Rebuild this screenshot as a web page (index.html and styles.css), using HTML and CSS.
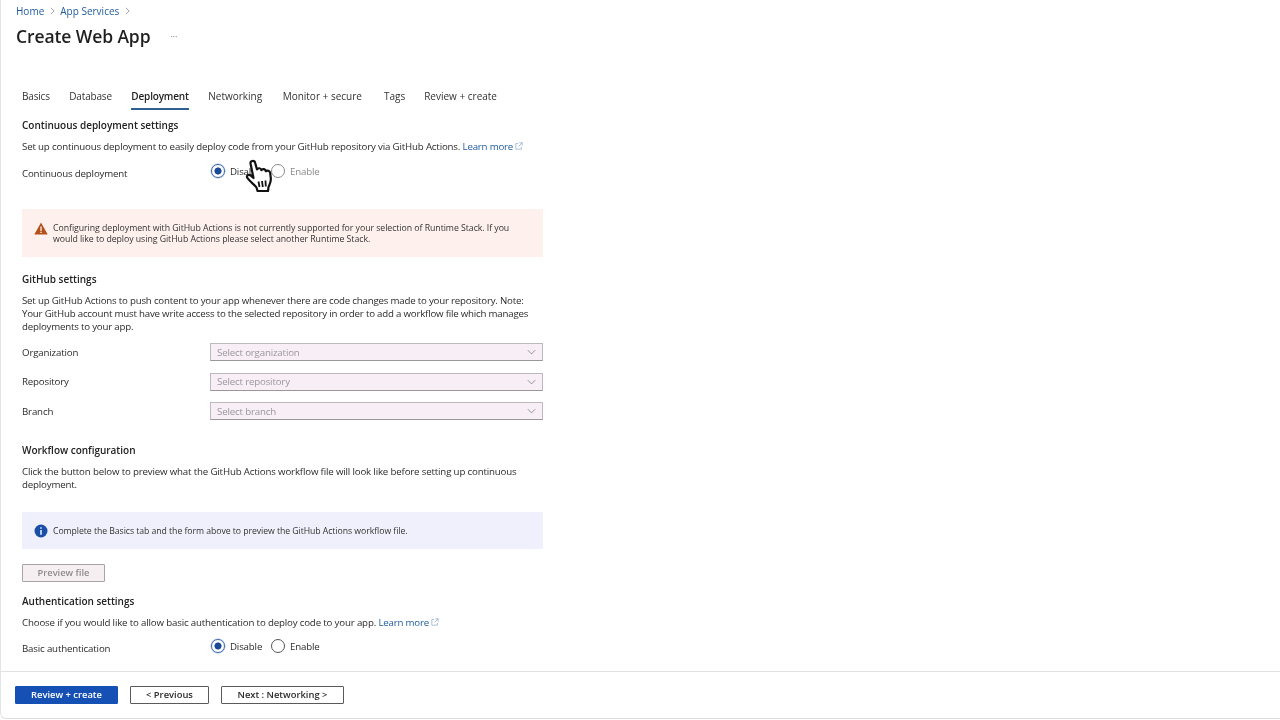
FILE: index.html
```html
<!DOCTYPE html>
<html lang="en">
<head>
<meta charset="utf-8">
<title>Create Web App</title>
<link rel="stylesheet" href="styles.css">
</head>
<body>
<div class="page">
  <main class="main">
    <nav class="crumbs">
      <a>Home</a><svg class="crumb-sep" viewBox="0 0 6 10"><path d="M1 1l4 4-4 4"/></svg>
      <a>App Services</a><svg class="crumb-sep" viewBox="0 0 6 10"><path d="M1 1l4 4-4 4"/></svg>
    </nav>
    <div class="title-row">
      <h1>Create Web App</h1>
      <span class="more">···</span>
    </div>
    <div class="tabs">
      <span class="tab">Basics</span>
      <span class="tab">Database</span>
      <span class="tab active">Deployment</span>
      <span class="tab wide">Networking</span>
      <span class="tab wide monitor">Monitor + secure</span>
      <span class="tab wide tags">Tags</span>
      <span class="tab wide">Review + create</span>
    </div>
    <div class="content">
      <h2 class="h-first">Continuous deployment settings</h2>
      <p class="line">Set up continuous deployment to easily deploy code from your GitHub repository via GitHub Actions. <a class="link">Learn more <svg class="ext" viewBox="0 0 10 10"><path d="M4 2H1v7h7V6M5.500 1H9v3.500M9 1L4.500 5.500"/></svg></a></p>
      <div class="radio-row cd-row">
        <span class="label">Continuous deployment</span>
        <span class="radio on"></span><span class="r-text r-d">Disable</span>
        <span class="radio dim"></span><span class="r-text dimmed">Enable</span>
      </div>
      <div class="banner warn">
        <svg class="b-icon" viewBox="0 0 14 13"><path fill="#b4501c" d="M7 .5L13.700 12.500H.3z"/><path fill="#fff" d="M6.400 4.500h1.200v4.500H6.400zM6.400 9.800h1.200v1.200H6.400z"/></svg>
        <span>Configuring deployment with GitHub Actions is not currently supported for your selection of Runtime Stack. If you would like to deploy using GitHub Actions please select another Runtime Stack.</span>
      </div>
      <h2 class="h-gh">GitHub settings</h2>
      <p class="para p-gh">Set up GitHub Actions to push content to your app whenever there are code changes made to your repository. Note: Your GitHub account must have write access to the selected repository in order to add a workflow file which manages deployments to your app.</p>
      <div class="fields">
        <div class="field"><span class="label">Organization</span><div class="select"><span>Select organization</span><svg class="chev" viewBox="0 0 12 7"><path d="M1 1l5 5 5-5"/></svg></div></div>
        <div class="field"><span class="label">Repository</span><div class="select"><span>Select repository</span><svg class="chev" viewBox="0 0 12 7"><path d="M1 1l5 5 5-5"/></svg></div></div>
        <div class="field"><span class="label">Branch</span><div class="select"><span>Select branch</span><svg class="chev" viewBox="0 0 12 7"><path d="M1 1l5 5 5-5"/></svg></div></div>
      </div>
      <h2 class="h-wf">Workflow configuration</h2>
      <p class="para p-wf">Click the button below to preview what the GitHub Actions workflow file will look like before setting up continuous deployment.</p>
      <div class="banner info">
        <svg class="b-icon" viewBox="0 0 14 14"><circle cx="7" cy="7" r="6.500" fill="#1a4fa8"/><path fill="#fff" d="M6.300 6h1.400v4.800H6.300zM6.300 3.300h1.400v1.500H6.300z"/></svg>
        <span class="info-text">Complete the Basics tab and the form above to preview the GitHub Actions workflow file.</span>
      </div>
      <button class="preview">Preview file</button>
      <h2 class="h-auth">Authentication settings</h2>
      <p class="line">Choose if you would like to allow basic authentication to deploy code to your app. <a class="link">Learn more <svg class="ext" viewBox="0 0 10 10"><path d="M4 2H1v7h7V6M5.500 1H9v3.500M9 1L4.500 5.500"/></svg></a></p>
      <div class="radio-row auth-row">
        <span class="label">Basic authentication</span>
        <span class="radio on"></span><span class="r-text r-d2">Disable</span>
        <span class="radio"></span><span class="r-text">Enable</span>
      </div>
    </div>
  </main>
  <footer class="footer">
    <button class="btn primary">Review + create</button>
    <button class="btn prev">&lt; Previous</button>
    <button class="btn next">Next : Networking &gt;</button>
  </footer>
  <svg class="cursor" viewBox="0 0 30 36">
    <path fill="#fff" stroke="#111" stroke-width="2.200" stroke-linejoin="round" d="M6.500 4.500c-.3-3 4-3.500 4.700-.5l1.800 6.500c1-2 4-1.500 4.500.7 1-1.800 4-1.200 4.400 1 1.200-1.300 4-.4 4.300 2l.6 5c.4 4-1.300 6.200-2.300 9l-.5 3.800H13.500l-1-3.500c-2-3-6-5.300-9-9.300-1.500-2 .5-4.200 2.700-3l3.300 2.800z"/>
    <path fill="none" stroke="#111" stroke-width="1.800" d="M14.500 22.500l1 5.500M18 22l.8 6M21.500 21.500l.3 6"/>
  </svg>
</div>
</body>
</html>
```

FILE: styles.css
```css
* { box-sizing: border-box; }
html, body { margin: 0; padding: 0; }
body {
  width: 1280px;
  height: 720px;
  overflow: hidden;
  background: #fff;
  color: #2b2b2b;
  font-family: "Open Sans", "Noto Sans", "Liberation Sans", sans-serif;
  font-size: 9.700px;
  letter-spacing: -0.160px;
}
.page {
  position: relative;
  height: 719px;
  display: flex;
  flex-direction: column;
  border-left: 1px solid #e4e4e6;
  border-bottom: 1px solid #dcdcde;
  border-bottom-left-radius: 6px;
  filter: blur(0.35px);
}
.main { flex: 1; padding-left: 15px; min-height: 0; }
a { color: #1f5a9e; }
.crumbs { height: 22px; display: flex; align-items: center; font-size: 10px; letter-spacing: 0; }
.crumb-sep { width: 5px; height: 8px; margin: 0 5.500px; fill: none; stroke: #8a8a8a; stroke-width: 1; }
.title-row { height: 28px; display: flex; align-items: center; }
h1 { margin: 0; font-size: 17.500px; font-weight: 600; color: #1f1f1f; letter-spacing: -0.100px; }
.more { margin-left: 20px; font-size: 9px; color: #777; }
.tabs { display: flex; margin: 37px 0 0 6px; height: 23px; }
.tab { margin-right: 19.500px; line-height: 19px; height: 23px; font-size: 10px; letter-spacing: -0.180px; color: #333; white-space: nowrap; }
.tab.wide { margin-right: 20.500px; letter-spacing: 0; }
.tab.monitor { margin-right: 22px; }
.tab.tags { margin-right: 19px; }
.tab.active { font-weight: 600; color: #222; border-bottom: 2px solid #2f5f8f; }
.content { padding-left: 6px; width: 535px; }
h2 { margin: 0; font-size: 10px; font-weight: 600; line-height: 14px; color: #222; letter-spacing: -0.020px; }
.h-first { margin-top: 8px; }
.line { margin: 8px 0 0; line-height: 14px; white-space: nowrap; }
.para { margin: 0; line-height: 13px; width: 521px; }
.link { color: #1f5a9e; letter-spacing: -0.200px; }
.ext { width: 8px; height: 8px; fill: none; stroke: #8fa9c8; stroke-width: .9; vertical-align: 0; }
.label { width: 188px; flex: none; }
.radio-row { display: flex; align-items: center; height: 16px; }
.radio-row .label { position: relative; top: 2px; }
.cd-row { margin-top: 9px; }
.auth-row { margin-top: 8px; }
.radio { width: 14px; height: 14px; flex: none; border: 1px solid #555; border-radius: 50%; background: #fff; margin-left: 1px; }
.radio.on { border: 1px solid #3a66a8; box-shadow: 0 0 0 0.500px #9db4d6; background: radial-gradient(circle, #1a4a96 0 3.200px, #fff 3.900px); }
.radio.dim { border-color: #8a8a8a; }
.r-text { margin-left: 5px; }
.r-d, .r-d2 { width: 40px; }
.dimmed { color: #8a8a8a; }
.banner { width: 521px; display: flex; font-size: 8.750px; line-height: 11.200px; color: #333; padding-left: 12px; letter-spacing: -0.050px; }
.b-icon { width: 14px; flex: none; margin-right: 5px; }
.warn { margin-top: 30px; height: 48px; background: #fef1ed; padding-top: 13px; padding-right: 30px; }
.warn span { padding-top: 1px; }
.warn .b-icon { height: 13px; }
.info { margin-top: 21px; height: 37px; background: #f0f0fc; align-items: center; font-size: 8.700px; }
.info-text { margin-top: 2px; }
.info .b-icon { height: 14px; }
.h-gh { margin-top: 15px; }
.p-gh { margin-top: 8px; letter-spacing: -0.200px; }
.fields { margin-top: 10px; display: flex; flex-direction: column; gap: 11.500px; }
.field { display: flex; align-items: center; height: 18px; }
.select {
  width: 333px;
  height: 18px;
  display: flex;
  align-items: center;
  justify-content: space-between;
  padding: 0 6px;
  background: #f7eff5;
  border: 1px solid #bdb9bd;
  border-bottom-color: #9a969a;
  color: #9a96a0;
}
.chev { width: 9px; height: 6px; fill: none; stroke: #77757a; stroke-width: 1; }
.h-wf { margin-top: 23px; }
.p-wf { margin-top: 8px; }
.preview {
  display: block;
  margin: 15px 0 0;
  width: 83px;
  height: 18px;
  padding: 0 0 1px;
  font: 600 9.300px "Open Sans", "Noto Sans", sans-serif;
  color: #8f8a8e;
  background: #f6eff1;
  border: 1px solid #a8a4a6;
  border-radius: 1px;
}
.h-auth { margin-top: 12px; }
.footer { height: 47px; flex: none; border-top: 1px solid #e2e2e4; display: flex; align-items: flex-start; padding: 14px 0 0 14px; }
.btn {
  height: 18px;
  padding: 0 0 1px;
  font: 600 9.400px "Open Sans", "Noto Sans", sans-serif;
  background: #fff;
  color: #2b2b2b;
  border: 1px solid #5a5a5a;
  border-radius: 1px;
}
.primary { width: 103px; background: #1550b4; border-color: #1550b4; color: #fff; }
.prev { width: 79px; margin-left: 12px; }
.next { width: 123px; margin-left: 12px; }
.cursor { position: absolute; left: 243px; top: 159px; width: 30px; height: 36px; }
```
